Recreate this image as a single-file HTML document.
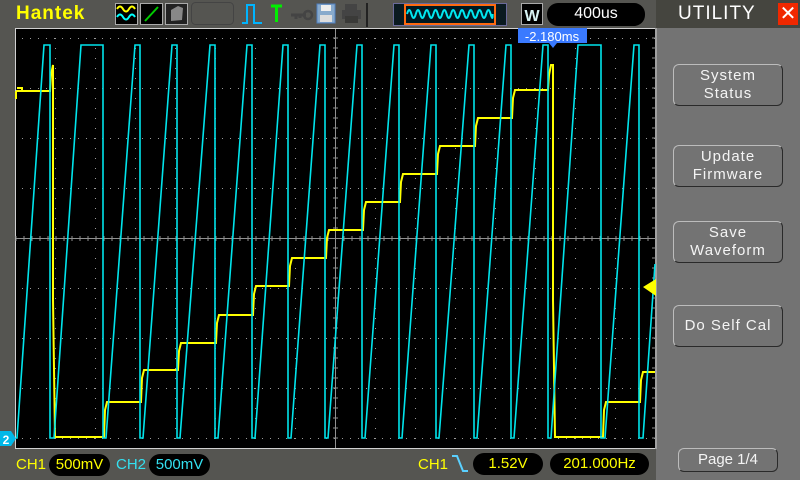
<!DOCTYPE html>
<html><head><meta charset="utf-8"><style>
*{margin:0;padding:0;box-sizing:border-box}
body{width:800px;height:480px;background:#555551;position:relative;overflow:hidden;font-family:"Liberation Sans","DejaVu Sans",sans-serif}
.abs{position:absolute}
.pill{position:absolute;background:#000;border-radius:11px;height:22px;line-height:22px;text-align:center;font-size:15px}
.btn{position:absolute;left:673px;width:110px;border:1px solid #bcbcbc;border-right-color:#2a2a2a;border-bottom-color:#2a2a2a;border-radius:6px;color:#f4f4f4;font-size:15px;text-align:center;line-height:18px;letter-spacing:1px;display:flex;align-items:center;justify-content:center}
</style></head><body>
<!-- top bar -->
<div class="abs" style="left:16px;top:3px;color:#ffff00;font-weight:bold;font-size:19px;letter-spacing:1px">Hantek</div>
<svg class="abs" style="left:0;top:0" width="656" height="28">
 <rect x="115.5" y="3.5" width="22" height="21" fill="#000" stroke="#aaa"/>
 <path d="M117,9 q3,-5 6,0 t6,0 t6,0" stroke="#ff0" fill="none" stroke-width="2"/>
 <path d="M117,17 q3,-5 6,0 t6,0 t6,0" stroke="#0ff" fill="none" stroke-width="2"/>
 <rect x="140.5" y="3.5" width="22" height="21" fill="#000" stroke="#aaa"/>
 <path d="M145,21 L158,7" stroke="#0c0" stroke-width="2"/>
 <rect x="165.5" y="3.5" width="22" height="21" fill="#222" stroke="#aaa"/>
 <path d="M171,21 L171,10 L178,6 L183,8 L182,20 Z" fill="#888"/>
 <rect x="191.5" y="2.5" width="42" height="22" rx="4" fill="none" stroke="#444"/>
 <path d="M242,23 L247,23 L247,5 L254,5 L254,23 L262,23" stroke="#00b4ff" stroke-width="2" fill="none"/>
 <path d="M271,6 L282,6 M276.5,6 L276.5,22" stroke="#00ee00" stroke-width="3" fill="none"/>
 <path d="M291,15 L306,15 M296,15 L296,19 M300,15 L300,18" stroke="#444" stroke-width="3" fill="none"/><circle cx="308" cy="15" r="4" fill="none" stroke="#444" stroke-width="2.5"/>
 <rect x="317" y="4" width="18" height="19" fill="#8ac" stroke="#5080c0"/><rect x="321" y="5" width="10" height="6" fill="#eee"/><rect x="320" y="15" width="12" height="7" fill="#ddd"/>
 <rect x="345" y="4" width="12" height="6" fill="#444"/><rect x="342" y="10" width="19" height="9" fill="#444"/><rect x="345" y="16" width="13" height="7" fill="#3a3a38"/>
 <rect x="366" y="3" width="2" height="24" fill="#222"/>
 <rect x="393.5" y="3.5" width="113" height="22" fill="#0a1a20" stroke="#6a6a9a"/>
 <rect x="405" y="5" width="90" height="19" fill="#001820" stroke="#ff6a10" stroke-width="2"/>
 <path d="M407,14 q2.2,-8 4.4,0 t4.4,0 t4.4,0 t4.4,0 t4.4,0 t4.4,0 t4.4,0 t4.4,0 t4.4,0 t4.4,0 t4.4,0 t4.4,0 t4.4,0 t4.4,0 t4.4,0 t4.4,0 t4.4,0 t4.4,0 t4.4,0 t2,0" stroke="#00e8f0" stroke-width="2" fill="none"/>
 <rect x="521.5" y="3.5" width="21" height="21" fill="#000" stroke="#aaa"/>
 <text x="532" y="21" fill="#d8f4f4" font-size="16" font-weight="bold" text-anchor="middle" font-family="Liberation Sans">W</text>
</svg>
<div class="pill" style="left:547px;top:3px;width:98px;height:23px;color:#fff;font-size:16px">400us</div>
<!-- right panel -->
<div class="abs" style="left:656px;top:0;width:144px;height:28px;background:#45453f"></div>
<div class="abs" style="left:656px;top:28px;width:144px;height:452px;background:#737373"></div>
<div class="abs" style="left:678px;top:3px;color:#fff;font-size:19px;letter-spacing:1px">UTILITY</div>
<div class="abs" style="left:778px;top:3px;width:20px;height:22px;background:#f02800;color:#fff;font-size:20px;line-height:22px;text-align:center;font-weight:bold">✕</div>
<div class="btn" style="top:64px;height:42px">System<br>Status</div>
<div class="btn" style="top:145px;height:42px">Update<br>Firmware</div>
<div class="btn" style="top:221px;height:42px">Save<br>Waveform</div>
<div class="btn" style="top:305px;height:42px">Do Self Cal</div>
<div class="btn" style="top:448px;height:24px;left:678px;width:100px;letter-spacing:0">Page 1/4</div>
<!-- screen -->
<svg class="abs" style="left:0;top:0" width="800" height="480">
 <defs>
  <pattern id="hd" x="15" y="0" width="8" height="50" patternUnits="userSpaceOnUse"><rect x="7" y="38" width="1" height="1" fill="#9a9a9a"/></pattern>
  <pattern id="vd" x="15" y="28" width="40" height="10" patternUnits="userSpaceOnUse"><rect x="0" y="0" width="1" height="1" fill="#9a9a9a"/></pattern>
 </defs>
 <rect x="15" y="28" width="641" height="420" fill="#000"/>
 <rect x="16" y="29" width="640" height="419" fill="url(#hd)"/>
 <rect x="16" y="29" width="640" height="419" fill="url(#vd)"/>
 <path d="M15.5,448 L15.5,28.5 L656,28.5" stroke="#d0d0d0" fill="none"/>
 <path d="M15,448.5 L656,448.5" stroke="#d0d0d0"/>
 <rect x="655" y="28" width="2" height="421" fill="#a0a0a0"/>
 <path d="M335.5,29 V448 M16,238.5 H656" stroke="#909090"/>
 <path d="M16,236 V241 M24,236V241 M32,236V241 M40,236V241 M48,236V241 M56,236V241 M64,236V241 M72,236V241 M80,236V241 M88,236V241 M96,236V241 M104,236V241 M112,236V241 M120,236V241 M128,236V241 M136,236V241 M144,236V241 M152,236V241 M160,236V241 M168,236V241 M176,236V241 M184,236V241 M192,236V241 M200,236V241 M208,236V241 M216,236V241 M224,236V241 M232,236V241 M240,236V241 M248,236V241 M256,236V241 M264,236V241 M272,236V241 M280,236V241 M288,236V241 M296,236V241 M304,236V241 M312,236V241 M320,236V241 M328,236V241 M344,236V241 M352,236V241 M360,236V241 M368,236V241 M376,236V241 M384,236V241 M392,236V241 M400,236V241 M408,236V241 M416,236V241 M424,236V241 M432,236V241 M440,236V241 M448,236V241 M456,236V241 M464,236V241 M472,236V241 M480,236V241 M488,236V241 M496,236V241 M504,236V241 M512,236V241 M520,236V241 M528,236V241 M536,236V241 M544,236V241 M552,236V241 M560,236V241 M568,236V241 M576,236V241 M584,236V241 M592,236V241 M600,236V241 M608,236V241 M616,236V241 M624,236V241 M632,236V241 M640,236V241 M648,236V241" stroke="#909090"/>
 <path d="M333,38H338 M333,48H338 M333,58H338 M333,68H338 M333,78H338 M333,88H338 M333,98H338 M333,108H338 M333,118H338 M333,128H338 M333,138H338 M333,148H338 M333,158H338 M333,168H338 M333,178H338 M333,188H338 M333,198H338 M333,208H338 M333,218H338 M333,228H338 M333,248H338 M333,258H338 M333,268H338 M333,278H338 M333,288H338 M333,298H338 M333,308H338 M333,318H338 M333,328H338 M333,338H338 M333,348H338 M333,358H338 M333,368H338 M333,378H338 M333,388H338 M333,398H338 M333,408H338 M333,418H338 M333,428H338 M333,438H338" stroke="#909090"/>
 <path d="M652,38H656 M652,48H656 M652,58H656 M652,68H656 M652,78H656 M652,88H656 M652,98H656 M652,108H656 M652,118H656 M652,128H656 M652,138H656 M652,148H656 M652,158H656 M652,168H656 M652,178H656 M652,188H656 M652,198H656 M652,208H656 M652,218H656 M652,228H656 M652,248H656 M652,258H656 M652,268H656 M652,278H656 M652,288H656 M652,298H656 M652,308H656 M652,318H656 M652,328H656 M652,338H656 M652,348H656 M652,358H656 M652,368H656 M652,378H656 M652,388H656 M652,398H656 M652,408H656 M652,418H656 M652,428H656 M652,438H656" stroke="#909090"/>
 <!-- yellow -->
 <path d="M16,91 L50,91 L51,75 L53,65 L53,300 L55,437 L104,437 L105,410 L107,402 L141,402 L142,378 L144,370 L178,370 L179,351 L181,343 L216,343 L217,323 L219,315 L253,315 L254,294 L256,286 L289,286 L290,266 L292,258 L326,258 L327,238 L329,230 L363,230 L364,210 L366,202 L400,202 L401,182 L403,174 L437,174 L438,154 L440,146 L475,146 L476,126 L478,118 L512,118 L513,98 L515,90 L548,90 L549,75 L551,65 L553,65 L553,300 L555,437 L603,437 L604,410 L606,402 L640,402 L641,380 L643,372 L655,372" stroke="#ffff00" stroke-width="2" fill="none"/>
 <path d="M17,88 h5 v3 M16,91 v8" stroke="#ffff00" stroke-width="2" fill="none"/>
 <!-- cyan -->
 <path d="M16,438 L17,438 L44,45 L50,45 L50,438 L54,438 L81,45 L103,45 L103,438 L106,438 L135,45 L140,45 L140,438 L143,438 L172,45 L177,45 L177,438 L180,438 L210,45 L215,45 L215,438 L218,438 L247,45 L252,45 L252,438 L255,438 L283,45 L288,45 L288,438 L291,438 L320,45 L325,45 L325,438 L328,438 L357,45 L362,45 L362,438 L365,438 L394,45 L399,45 L399,438 L402,438 L431,45 L436,45 L436,438 L439,438 L469,45 L474,45 L474,438 L477,438 L506,45 L511,45 L511,438 L514,438 L543,45 L548,45 L548,438 L551,438 L578,45 L601,45 L601,438 L605,438 L634,45 L639,45 L639,438 L643,438 L655,264" stroke="#00e4ec" stroke-width="1.6" fill="none"/>
 <!-- markers -->
 <path d="M0,431 H11 L16,438.5 L11,446 H0 Z" fill="#00b8e8"/>
 <text x="6" y="444" fill="#fff" font-size="12" font-weight="bold" text-anchor="middle" font-family="Liberation Sans">2</text>
 <path d="M643,287 L656,279 L656,296 Z" fill="#ffff00"/>
 <rect x="518" y="28" width="69" height="15" fill="#3a7aff"/>
 <path d="M549,43 L557,43 L553,48 Z" fill="#3a7aff"/>
 <text x="552" y="41" fill="#fff" font-size="13" text-anchor="middle" font-family="Liberation Sans">-2.180ms</text>
 <!-- bottom trigger icon -->
 <path d="M452,456 L457,456 L463,471 L468,471" stroke="#5ad0ff" stroke-width="2" fill="none"/>
</svg>
<!-- bottom bar -->
<div class="abs" style="left:16px;top:456px;color:#ffff00;font-size:15px">CH1</div>
<div class="pill" style="left:49px;top:454px;width:61px;color:#ffff00">500mV</div>
<div class="abs" style="left:116px;top:456px;color:#33e0f0;font-size:15px">CH2</div>
<div class="pill" style="left:149px;top:454px;width:61px;color:#33e0f0">500mV</div>
<div class="abs" style="left:418px;top:456px;color:#ffff00;font-size:15px">CH1</div>
<div class="pill" style="left:473px;top:453px;width:70px;color:#ffff00">1.52V</div>
<div class="pill" style="left:550px;top:453px;width:99px;color:#ffff00">201.000Hz</div>
</body></html>
